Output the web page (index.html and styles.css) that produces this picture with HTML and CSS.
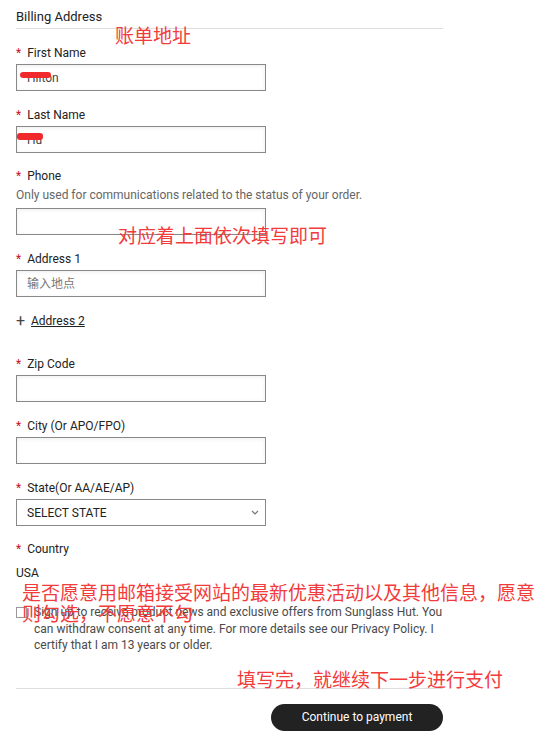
FILE: index.html
```html
<!DOCTYPE html>
<html>

<head>
    <meta charset="UTF-8" />
    <meta name="viewport" content="width=device-width, initial-scale=1">
    <title>Billing Address</title>
    <link rel="stylesheet" href="styles.css">
</head>

<body>
    <div class="form">
        <div class="title">Billing Address</div>

        <div class="field">
            <label for="first-name"><span class="req">*</span>First Name</label>
            <input type="text" id="first-name" value="Hilton">
        </div>
        <div class="field">
            <label for="last-name"><span class="req">*</span>Last Name</label>
            <input type="text" id="last-name" value="Hu">
        </div>
        <div class="field phone">
            <label for="phone"><span class="req">*</span>Phone</label>
            <div class="hint">Only used for communications related to the status of your order.</div>
            <input type="text" id="phone">
        </div>
        <div class="field">
            <label for="address1"><span class="req">*</span>Address 1</label>
            <input type="text" id="address1" placeholder="输入地点">
        </div>
        <div class="add-line">
            <span class="plus">+</span><a href="#">Address 2</a>
        </div>
        <div class="field zip">
            <label for="zip"><span class="req">*</span>Zip Code</label>
            <input type="text" id="zip">
        </div>
        <div class="field">
            <label for="city"><span class="req">*</span>City (Or APO/FPO)</label>
            <input type="text" id="city">
        </div>
        <div class="field">
            <label for="state"><span class="req">*</span>State(Or AA/AE/AP)</label>
            <div class="select">
                <span>SELECT STATE</span>
                <svg width="8" height="5" viewBox="0 0 8 5"><path d="M1 1l3 3 3-3" fill="none" stroke="#777" stroke-width="1.2"/></svg>
            </div>
        </div>
        <div class="field country-field">
            <label><span class="req">*</span>Country</label>
            <div class="country">USA</div>
        </div>

        <div class="consent">
            <input type="checkbox" id="news">
            <label for="news">Sign up to receive product news and exclusive offers from Sunglass Hut. You can withdraw consent at any time. For more details see our Privacy Policy. I certify that I am 13 years or older.</label>
        </div>

        <div class="actions">
            <button type="button" class="continue">Continue to payment</button>
        </div>
    </div>

    <!-- annotations drawn over the screenshot -->
    <div class="blot blot-first"></div>
    <div class="blot blot-last"></div>
    <div class="note note-title">账单地址</div>
    <div class="note note-fill">对应着上面依次填写即可</div>
    <div class="note note-news">是否愿意用邮箱接受网站的最新优惠活动以及其他信息，愿意<br>则勾选，不愿意不勾</div>
    <div class="note note-pay">填写完，就继续下一步进行支付</div>
</body>

</html>
```

FILE: styles.css
```css
body {
    margin: 0;
    font-family: Roboto, "Liberation Sans", sans-serif;
    font-size: 12px;
    color: #222222;
    background: #ffffff;
}

.form {
    width: 427px;
    margin-left: 16px;
    padding-top: 9px;
}

.title {
    font-size: 13px;
    line-height: 16px;
    padding-bottom: 3px;
    border-bottom: 1px solid #dddddd;
}

.field {
    margin-top: 16px;
}

.field.phone {
    margin-top: 15px;
}

.field label {
    display: block;
    line-height: 16px;
    margin-bottom: 3px;
}

.req {
    color: #c8102e;
    margin-right: 6px;
}

.hint {
    color: #666666;
    line-height: 16px;
    margin-top: 0;
    margin-bottom: 5px;
}

.field input {
    display: block;
    box-sizing: border-box;
    width: 250px;
    height: 27px;
    margin: 0;
    padding: 0 10px;
    border: 1px solid #888888;
    border-radius: 0;
    box-shadow: inset 0 1px 4px rgba(0, 0, 0, 0.07);
    font-family: Roboto, "Noto Sans CJK SC", sans-serif;
    font-size: 12px;
    color: #444444;
    outline: none;
}

.field input::placeholder {
    color: #777777;
}

.add-line {
    margin-top: 16px;
    line-height: 16px;
    display: flex;
    align-items: center;
}

.plus {
    font-size: 16px;
    color: #444444;
    width: 15px;
}

.add-line a {
    color: #222222;
    text-decoration: underline;
}

.field.zip {
    margin-top: 27px;
}

.select {
    box-sizing: border-box;
    width: 250px;
    height: 27px;
    border: 1px solid #888888;
    padding: 0 6px 0 10px;
    display: flex;
    align-items: center;
    justify-content: space-between;
    text-transform: uppercase;
}

.field.country-field {
    margin-top: 15px;
}

.country {
    margin-top: 8px;
    line-height: 16px;
}

.consent {
    margin-top: 23px;
    display: flex;
    align-items: flex-start;
}

.consent input {
    box-sizing: border-box;
    width: 11px;
    height: 11px;
    margin: 3px 7px 0 0;
    flex: none;
    appearance: none;
    border: 1px solid #999999;
    background: #ffffff;
}

.consent label {
    color: #4a4a4a;
    line-height: 16.5px;
}

.actions {
    margin-top: 34px;
    padding-top: 15px;
    border-top: 1px solid #dddddd;
    display: flex;
    justify-content: flex-end;
}

.continue {
    width: 172px;
    height: 27px;
    border: none;
    border-radius: 14px;
    background: #222222;
    color: #ffffff;
    font-family: Roboto, sans-serif;
    font-size: 12px;
    cursor: pointer;
}

.blot {
    position: absolute;
    height: 6px;
    background: #f0292c;
    border-radius: 3px;
}

.blot-first {
    left: 20px;
    top: 72px;
    width: 31px;
}

.blot-last {
    left: 17px;
    top: 133px;
    width: 26px;
    height: 7px;
}

.note {
    position: absolute;
    font-family: "Noto Sans CJK SC", sans-serif;
    font-size: 19px;
    line-height: 21px;
    color: #f23b3b;
    white-space: nowrap;
}

.note-title {
    left: 115px;
    top: 24px;
}

.note-fill {
    left: 118px;
    top: 224px;
}

.note-news {
    left: 22px;
    top: 581px;
}

.note-pay {
    left: 237px;
    top: 668px;
}
```
